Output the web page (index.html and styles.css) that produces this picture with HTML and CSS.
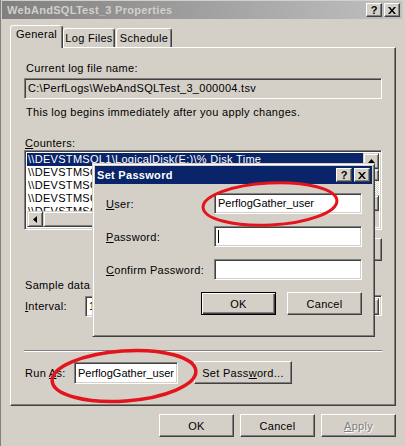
FILE: index.html
```html
<!DOCTYPE html>
<html>
<head>
<meta charset="utf-8">
<link rel="stylesheet" href="styles.css">
</head>
<body>
<div class="window">
  <div class="titlebar">
    <span class="title">WebAndSQLTest_3 Properties</span>
    <div class="capbtns">
      <span class="capbtn help">?</span>
      <span class="capbtn"><svg width="8" height="7" viewBox="0 0 8 7"><path d="M0 0h2l2 2.5L6 0h2L5 3.5 8 7H6L4 4.5 2 7H0l3-3.5z" fill="#000"/></svg></span>
    </div>
  </div>
  <div class="body">
    <div class="tabs">
      <div class="tab tab-general active">General</div>
      <div class="tab tab-logs">Log Files</div>
      <div class="tab tab-sched">Schedule</div>
    </div>
    <div class="panel">
      <div class="text first">Current log file name:</div>
      <div class="field ro">C:\PerfLogs\WebAndSQLTest_3_000004.tsv</div>
      <div class="text note">This log begins immediately after you apply changes.</div>
      <div class="text counters"><u>C</u>ounters:</div>
      <div class="listbox">
        <div class="list-top">
          <div class="rows">
            <div class="row sel">\\DEVSTMSQL1\LogicalDisk(E:)\% Disk Time</div>
            <div class="row">\\DEVSTMSQL1\LogicalDisk(E:)\Avg. Disk Queue Length</div>
            <div class="row">\\DEVSTMSQL1\Memory\Pages/sec</div>
            <div class="row">\\DEVSTMSQL1\Processor(_Total)\% Processor Time</div>
            <div class="row">\\DEVSTMSQL1\SQLServer:Buffer Manager\Page life expectancy</div>
          </div>
          <div class="vscroll">
            <div class="sbtn"><svg width="7" height="4" viewBox="0 0 7 4"><path d="M0 4h7L3.5 0z" fill="#000"/></svg></div>
            <div class="vthumb"></div>
            <div class="vtrack"></div>
            <div class="sbtn"><svg width="7" height="4" viewBox="0 0 7 4"><path d="M0 0h7L3.5 4z" fill="#000"/></svg></div>
          </div>
        </div>
        <div class="hscroll">
          <div class="sbtn left"><svg width="4" height="7" viewBox="0 0 4 7"><path d="M4 0v7L0 3.5z" fill="#000"/></svg></div>
          <div class="hthumb"></div>
          <div class="htrack"></div>
          <div class="sbtn"><svg width="4" height="7" viewBox="0 0 4 7"><path d="M0 0v7L4 3.5z" fill="#000"/></svg></div>
          <div class="corner"></div>
        </div>
      </div>
      <div class="btnrow">
        <div class="btn"></div>
        <div class="btn"></div>
        <div class="btn"></div>
      </div>
      <div class="text sample">Sample data every:</div>
      <div class="interval-row">
        <span class="ilabel"><u>I</u>nterval:</span>
        <div class="field spin">15</div>
        <div class="field combo"><div class="dropbtn"></div></div>
      </div>
      <div class="sep"></div>
      <div class="runas-row">
        <span class="rlabel">Run <u>A</u>s:</span>
        <div class="field runfield">PerflogGather_user</div>
        <div class="btn setpw">Set Pass<u>w</u>ord...</div>
      </div>
    </div>
    <div class="footer">
      <div class="btn">OK</div>
      <div class="btn">Cancel</div>
      <div class="btn disabled"><u>A</u>pply</div>
    </div>
  </div>

  <div class="dialog">
    <div class="dtitle">
      <span class="dtitle-text">Set Password</span>
      <div class="capbtns">
        <span class="capbtn help">?</span>
        <span class="capbtn"><svg width="8" height="7" viewBox="0 0 8 7"><path d="M0 0h2l2 2.5L6 0h2L5 3.5 8 7H6L4 4.5 2 7H0l3-3.5z" fill="#000"/></svg></span>
      </div>
    </div>
    <div class="dbody">
      <div class="drow"><span class="dlabel"><u>U</u>ser:</span><div class="field dfield">PerflogGather_user</div></div>
      <div class="drow"><span class="dlabel"><u>P</u>assword:</span><div class="field dfield"><span class="caret"></span></div></div>
      <div class="drow"><span class="dlabel"><u>C</u>onfirm Password:</span><div class="field dfield"></div></div>
      <div class="dbtns">
        <div class="btn default">OK</div>
        <div class="btn">Cancel</div>
      </div>
    </div>
  </div>

  <svg class="marks" width="405" height="446" viewBox="0 0 405 446">
    <ellipse cx="269" cy="204" rx="67" ry="21" transform="rotate(-3 269 204)" fill="none" stroke="#e3141c" stroke-width="3"/>
    <ellipse cx="123" cy="376" rx="72" ry="25" transform="rotate(-4 123 376)" fill="none" stroke="#e3141c" stroke-width="3.5"/>
  </svg>
</div>
</body>
</html>
```

FILE: styles.css
```css
* { box-sizing: border-box; }

body {
  margin: 0;
  width: 405px;
  height: 446px;
  overflow: hidden;
  background: #d4d0c8;
  font-family: "Liberation Sans", Arial, sans-serif;
  font-size: 11px;
  letter-spacing: 0.3px;
  color: #000;
}

.window {
  position: relative;
  width: 405px;
  height: 446px;
  background: #d4d0c8;
  border-left: 1px solid #808080;
  padding: 1px 3px 0 1px;
}

.titlebar {
  height: 18px;
  display: flex;
  align-items: center;
  justify-content: space-between;
  padding: 0 2px 0 5px;
  background: linear-gradient(to right, #808080, #c0c0c0);
}

.title {
  font-weight: bold;
  font-size: 11px;
  color: #d4d0c8;
}

.capbtns { display: flex; gap: 2px; }

.capbtn {
  width: 16px;
  height: 14px;
  background: #d4d0c8;
  border: 1px solid;
  border-color: #fff #404040 #404040 #fff;
  box-shadow: inset -1px -1px #808080;
  display: flex;
  align-items: center;
  justify-content: center;
  font-weight: bold;
  font-size: 11px;
  letter-spacing: 0;
  line-height: 1;
}

.body { padding: 0 6px 0 8px; }

.tabs {
  display: flex;
  align-items: flex-end;
  height: 22px;
  margin-top: 6px;
  position: relative;
  z-index: 1;
}

.tab {
  height: 19px;
  border: 1px solid;
  border-bottom: none;
  border-color: #fff #404040 transparent #fff;
  border-radius: 3px 3px 0 0;
  box-shadow: inset -1px 0 #808080;
  text-align: center;
  line-height: 18px;
  background: #d4d0c8;
}

.tab-general { width: 53px; }
.tab-logs { width: 52px; }
.tab-sched { width: 56px; margin-left: 1px; }

.tab.active {
  height: 23px;
  margin-bottom: -1px;
  line-height: 16px;
}

.panel {
  height: 359px;
  border: 1px solid;
  border-color: #fff #404040 #404040 #fff;
  box-shadow: inset -1px -1px #808080;
  padding: 0 13px;
}

.text { line-height: 13px; white-space: nowrap; }
.text.first { margin-top: 14px; padding-left: 2px; }
.text.note { margin-top: 7px; padding-left: 2px; }
.text.counters { margin-top: 18px; padding-left: 1px; }
.text.sample { margin-top: 18px; padding-left: 1px; }

.field {
  height: 21px;
  background: #fff;
  border: 1px solid;
  border-color: #808080 #fff #fff #808080;
  box-shadow: inset 1px 1px #404040, inset -1px -1px #d4d0c8;
  padding: 0 3px;
  line-height: 19px;
  letter-spacing: 0;
  white-space: nowrap;
  overflow: hidden;
}

.field.ro { margin-top: 3px; background: #d4d0c8; letter-spacing: 0.3px; }

.listbox {
  height: 80px;
  background: #fff;
  border: 1px solid;
  border-color: #808080 #fff #fff #808080;
  box-shadow: inset 1px 1px #404040, inset -1px -1px #d4d0c8;
  padding: 2px;
  display: flex;
  flex-direction: column;
}

.list-top { flex: 1; display: flex; overflow: hidden; }

.rows { flex: 1; overflow: hidden; }

.row {
  height: 13px;
  line-height: 13px;
  padding-left: 1px;
  white-space: nowrap;
  overflow: hidden;
}

.row.sel { background: #0a246a; color: #fff; }

.vscroll {
  width: 16px;
  display: flex;
  flex-direction: column;
}

.sbtn {
  width: 16px;
  height: 16px;
  flex: none;
  background: #d4d0c8;
  border: 1px solid;
  border-color: #d4d0c8 #404040 #404040 #d4d0c8;
  box-shadow: inset 1px 1px #fff, inset -1px -1px #808080;
  display: flex;
  align-items: center;
  justify-content: center;
}

.vthumb {
  height: 12px;
  background: #d4d0c8;
  border: 1px solid;
  border-color: #d4d0c8 #404040 #404040 #d4d0c8;
  box-shadow: inset 1px 1px #fff, inset -1px -1px #808080;
}

.vtrack, .htrack {
  flex: 1;
  background-color: #fff;
  background-image: repeating-conic-gradient(#d4d0c8 0 25%, #fff 0 50%);
  background-size: 2px 2px;
}

.hscroll { height: 16px; display: flex; flex: none; }

.hthumb {
  width: 200px;
  background: #d4d0c8;
  border: 1px solid;
  border-color: #d4d0c8 #404040 #404040 #d4d0c8;
  box-shadow: inset 1px 1px #fff, inset -1px -1px #808080;
}

.corner { width: 16px; background: #d4d0c8; }

.btn {
  width: 75px;
  height: 23px;
  background: #d4d0c8;
  border: 1px solid;
  border-color: #fff #404040 #404040 #fff;
  box-shadow: inset -1px -1px #808080;
  display: flex;
  align-items: center;
  justify-content: center;
  white-space: nowrap;
}

.btn.disabled { color: #808080; text-shadow: 1px 1px #fff; }

.btn.default {
  border: 1px solid #000;
  box-shadow: inset 1px 1px #fff, inset -1px -1px #404040, inset -2px -2px #808080;
}

.btnrow {
  margin-top: 8px;
  display: flex;
  justify-content: flex-end;
  gap: 6px;
}

.interval-row {
  margin-top: 3px;
  height: 22px;
  display: flex;
  align-items: center;
}

.ilabel { width: 61px; padding-left: 1px; }
.spin { width: 60px; height: 21px; margin-top: 1px; }
.combo {
  flex: none;
  width: 90px;
  margin-left: auto;
  position: relative;
  margin-top: -2px;
}
.dropbtn {
  position: absolute;
  right: 2px;
  top: 2px;
  width: 16px;
  height: 17px;
  background: #d4d0c8;
  border: 1px solid;
  border-color: #d4d0c8 #404040 #404040 #d4d0c8;
  box-shadow: inset 1px 1px #fff, inset -1px -1px #808080;
}

.sep {
  margin-top: 33px;
  height: 2px;
  border-top: 1px solid #808080;
  border-bottom: 1px solid #fff;
}

.runas-row {
  margin-top: 9px;
  display: flex;
  align-items: center;
}

.rlabel { width: 50px; padding-left: 1px; }
.runfield { width: 104px; height: 22px; line-height: 20px; }
.setpw { width: 98px; margin-left: 16px; }

.footer {
  margin-top: 8px;
  display: flex;
  justify-content: flex-end;
  gap: 6px;
}

.dialog {
  position: absolute;
  left: 91px;
  top: 163px;
  width: 283px;
  height: 174px;
  background: #d4d0c8;
  border: 1px solid;
  border-color: #d4d0c8 #404040 #404040 #d4d0c8;
  box-shadow: inset 1px 1px #fff, inset -1px -1px #808080;
  padding: 2px;
}

.dtitle {
  height: 18px;
  background: #0a246a;
  display: flex;
  align-items: center;
  justify-content: space-between;
  padding: 0 2px;
}

.dtitle-text {
  color: #fff;
  font-weight: bold;
  font-size: 11px;
}

.dbody { padding: 9px 10px 0 10px; }

.drow {
  display: flex;
  align-items: center;
  height: 21px;
  margin-bottom: 12px;
}

.dlabel { width: 109px; padding-left: 1px; }
.dfield { width: 148px; }

.caret {
  display: inline-block;
  width: 1px;
  height: 13px;
  background: #000;
  vertical-align: middle;
  margin-top: -2px;
}

.dbtns {
  display: flex;
  justify-content: flex-end;
  gap: 11px;
  margin-top: 6px;
}

.marks {
  position: absolute;
  left: 0;
  top: 0;
  pointer-events: none;
}
```
